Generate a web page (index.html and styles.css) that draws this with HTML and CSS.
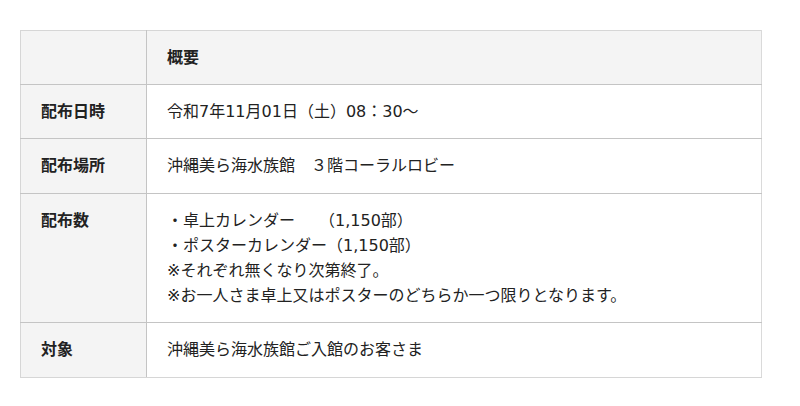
FILE: index.html
```html
<!DOCTYPE html>
<html lang="ja">
<head>
<meta charset="utf-8">
<link rel="stylesheet" href="styles.css">
</head>
<body>
<div class="wrap">
<table class="info">
  <tr class="head">
    <th class="label"></th>
    <th class="value">概要</th>
  </tr>
  <tr>
    <th class="label">配布日時</th>
    <td class="value">令和7年11月01日（土）08：30～</td>
  </tr>
  <tr>
    <th class="label">配布場所</th>
    <td class="value">沖縄美ら海水族館　３階コーラルロビー</td>
  </tr>
  <tr>
    <th class="label">配布数</th>
    <td class="value">・卓上カレンダー　　（1,150部）<br>・ポスターカレンダー（1,150部）<br>※それぞれ無くなり次第終了。<br>※お一人さま卓上又はポスターのどちらか一つ限りとなります。</td>
  </tr>
  <tr class="last">
    <th class="label">対象</th>
    <td class="value">沖縄美ら海水族館ご入館のお客さま</td>
  </tr>
</table>
</div>
</body>
</html>
```

FILE: styles.css
```css
html, body {
  margin: 0;
  padding: 0;
  background: #fff;
}
body {
  font-family: "DejaVu Sans", "Noto Sans CJK JP", sans-serif;
  color: #222;
}
.wrap {
  padding: 30px 38px 0 20px;
}
.info {
  width: 742px;
  border-collapse: collapse;
  font-size: 16px;
  line-height: 25.2px;
}
.info th, .info td {
  border: 1px solid #c4c4c4;
  padding: 14px 20px 14px;
  text-align: left;
  vertical-align: top;
}
.info th {
  font-weight: bold;
  background: #f4f4f4;
}
.info .label {
  width: 85px;
  border-left-color: #d6d6d6;
}
.info td.value,
.info th.value {
  border-right-color: #dadada;
}
.info td.value {
  background: #fff;
  font-weight: normal;
}
.info .head th {
  background: #f4f4f4;
  border-top-color: #d6d6d6;
}
.info .last th,
.info .last td {
  border-bottom-color: #d6d6d6;
}
```
